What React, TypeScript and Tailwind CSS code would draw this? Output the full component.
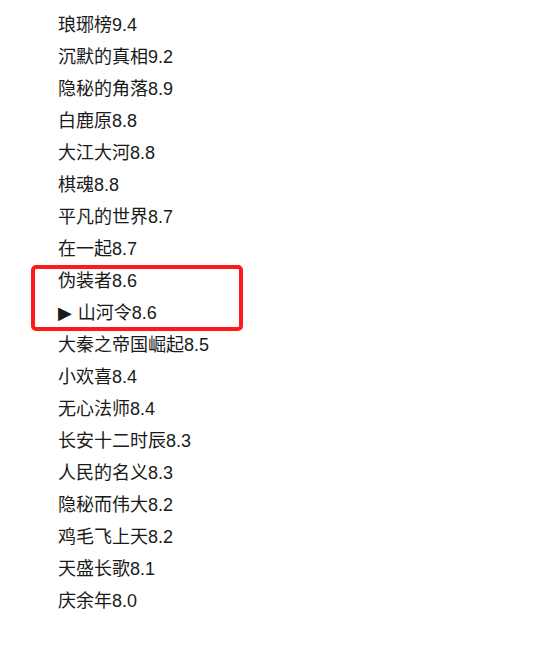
const shows = [
  '琅琊榜9.4',
  '沉默的真相9.2',
  '隐秘的角落8.9',
  '白鹿原8.8',
  '大江大河8.8',
  '棋魂8.8',
  '平凡的世界8.7',
  '在一起8.7',
  '伪装者8.6',
  '山河令8.6',
  '大秦之帝国崛起8.5',
  '小欢喜8.4',
  '无心法师8.4',
  '长安十二时辰8.3',
  '人民的名义8.3',
  '隐秘而伟大8.2',
  '鸡毛飞上天8.2',
  '天盛长歌8.1',
  '庆余年8.0',
];

export default function App() {
  return (
    <div
      className="relative w-[544px] h-[648px] bg-white text-[#1a1a1a] text-[18px]"
      style={{ fontFamily: '"Liberation Sans", "Noto Sans CJK SC", sans-serif' }}
    >
      <ul className="pt-[9px] pl-[58px]">
        {shows.map((s, i) => (
          <li key={s} className="h-8 leading-8">
            {i === 9 && <span className="font-['DejaVu_Sans'] text-[18px] mr-[6px]">▶︎</span>}
            {s}
          </li>
        ))}
      </ul>
      {/* highlight box over the two rows */}
      <div className="absolute left-[31px] top-[265px] w-[212px] h-[66px] border-4 border-[#ff1a1a] rounded-[5px]" />
    </div>
  );
}
